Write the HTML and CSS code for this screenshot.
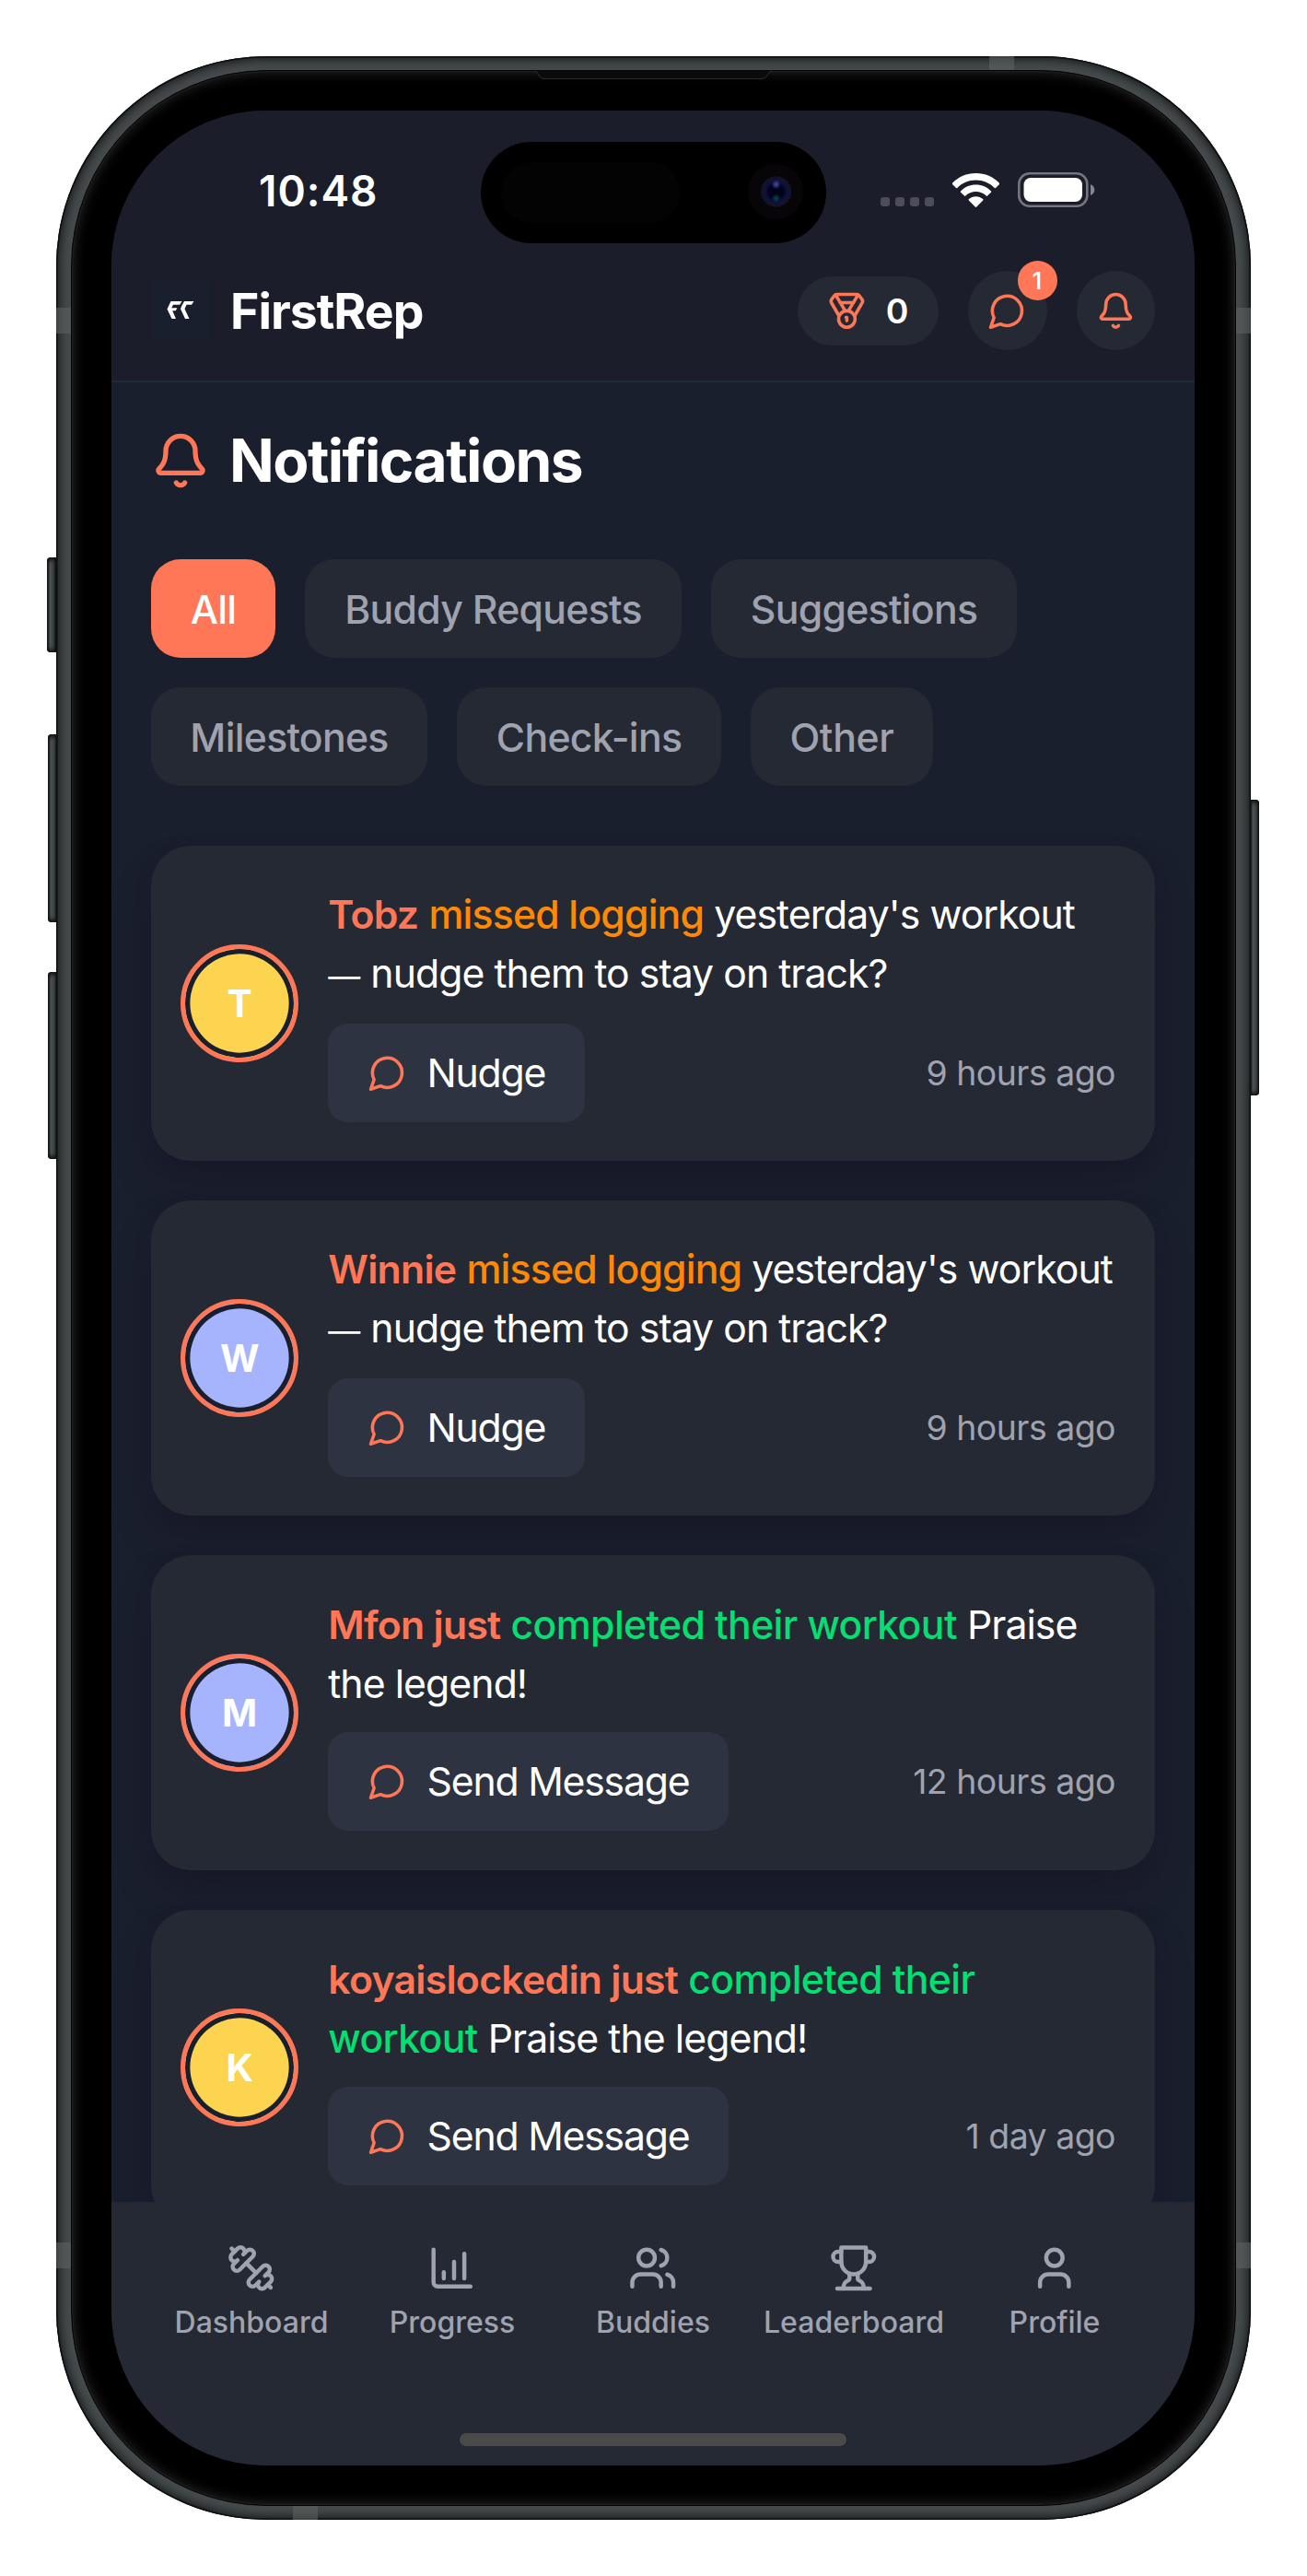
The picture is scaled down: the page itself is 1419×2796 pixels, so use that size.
FILE: index.html
```html
<!DOCTYPE html>
<html lang="en">
<head>
<meta charset="utf-8">
<title>FirstRep – Notifications</title>
<link rel="stylesheet" href="styles.css">
</head>
<body>
<svg class="sprite" aria-hidden="true">
  <symbol id="bell" viewBox="0 0 24 24"><path d="M10.268 21a2 2 0 0 0 3.464 0"/><path d="M3.262 15.326A1 1 0 0 0 4 17h16a1 1 0 0 0 .74-1.673C19.41 13.956 18 12.499 18 8A6 6 0 0 0 6 8c0 4.499-1.411 5.956-2.738 7.326"/></symbol>
  <symbol id="chat" viewBox="0 0 24 24"><path d="M7.9 20A9 9 0 1 0 4 16.1L2 22Z"/></symbol>
  <symbol id="medal" viewBox="0 0 24 24"><path d="M7.21 15 2.66 7.14a2 2 0 0 1 .13-2.2L4.4 2.8A2 2 0 0 1 6 2h12a2 2 0 0 1 1.6.8l1.6 2.14a2 2 0 0 1 .14 2.2L16.79 15"/><path d="M11 12 5.12 2.2"/><path d="m13 12 5.88-9.8"/><path d="M8 7h8"/><circle cx="12" cy="17" r="5"/><path d="M12 18v-2h-.5"/></symbol>
  <symbol id="dumbbell" viewBox="0 0 24 24"><path d="M14.4 14.4 9.6 9.6"/><path d="M18.657 21.485a2 2 0 1 1-2.829-2.828l-1.767 1.768a2 2 0 1 1-2.829-2.829l6.364-6.364a2 2 0 1 1 2.829 2.829l-1.768 1.767a2 2 0 1 1 2.828 2.829z"/><path d="m21.5 21.5-1.4-1.4"/><path d="M3.9 3.9 2.5 2.5"/><path d="M6.404 12.768a2 2 0 1 1-2.829-2.829l1.768-1.767a2 2 0 1 1-2.828-2.829l2.828-2.828a2 2 0 1 1 2.829 2.828l1.767-1.768a2 2 0 1 1 2.829 2.829z"/></symbol>
  <symbol id="chart" viewBox="0 0 24 24"><path d="M13 17V9"/><path d="M18 17V5"/><path d="M3 3v16a2 2 0 0 0 2 2h16"/><path d="M8 17v-3"/></symbol>
  <symbol id="users" viewBox="0 0 24 24"><path d="M16 21v-2a4 4 0 0 0-4-4H6a4 4 0 0 0-4 4v2"/><circle cx="9" cy="7" r="4"/><path d="M22 21v-2a4 4 0 0 0-3-3.87"/><path d="M16 3.13a4 4 0 0 1 0 7.75"/></symbol>
  <symbol id="trophy" viewBox="0 0 24 24"><path d="M6 9H4.5a2.5 2.5 0 0 1 0-5H6"/><path d="M18 9h1.5a2.5 2.5 0 0 0 0-5H18"/><path d="M4 22h16"/><path d="M10 14.66V17c0 .55-.47.98-.97 1.21C7.85 18.75 7 20.24 7 22"/><path d="M14 14.66V17c0 .55.47.98.97 1.21C16.15 18.75 17 20.24 17 22"/><path d="M18 2H6v7a6 6 0 0 0 12 0V2Z"/></symbol>
  <symbol id="user" viewBox="0 0 24 24"><path d="M19 21v-2a4 4 0 0 0-4-4H9a4 4 0 0 0-4 4v2"/><circle cx="12" cy="7" r="4"/></symbol>
</svg>

<div class="device">
  <i class="key key-action"></i><i class="key key-up"></i><i class="key key-down"></i><i class="key key-power"></i>
  <div class="frame">
    <i class="band band-l1"></i><i class="band band-l2"></i><i class="band band-r1"></i><i class="band band-r2"></i><i class="band band-t"></i><i class="band band-b"></i>
    <div class="bezel">
      <svg class="speaker" viewBox="0 0 258 12"><path d="M0 0.500H258Q255 1 253.500 4.500Q251.500 9.500 247 9.500H11Q6.500 9.500 4.500 4.500Q3 1 0 0.500Z" fill="#0b0b0b"/><path d="M0 1Q3 1 4.500 5Q6.500 9.500 11 9.500H247Q251.500 9.500 253.500 5Q255 1 258 1" fill="none" stroke="#2b2b2b"/></svg>
      <main class="screen">
        <header class="top">
          <div class="status">
            <span class="clock">10:48</span>
            <div class="signals">
              <span class="dots"><i></i><i></i><i></i><i></i></span>
              <svg class="wifi" viewBox="0 0 51 37" fill="#fff"><path d="M25.500 0C35.500 0 44.500 4 51 10.700C51.400 11.100 51.400 11.600 51 12L47 15.900C46.600 16.300 46.100 16.300 45.700 15.900C40.500 10.700 33.400 7.600 25.500 7.600S10.500 10.700 5.300 15.900C4.900 16.300 4.400 16.300 4 15.900L0 12C-.4 11.600-.4 11.100 0 10.700C6.500 4 15.500 0 25.500 0Z"/><path d="M25.500 12.500C32 12.500 37.800 15.200 42 19.400C42.400 19.800 42.400 20.300 42 20.700L38 24.600C37.600 25 37.100 25 36.700 24.600C33.800 21.800 29.900 20.100 25.500 20.100S17.200 21.800 14.300 24.600C13.900 25 13.400 25 13 24.600L9 20.700C8.600 20.300 8.600 19.800 9 19.400C13.200 15.200 19 12.500 25.500 12.500Z"/><path d="M25.500 25.200C28.400 25.200 31.100 26.300 33.100 28.100C33.600 28.500 33.600 29.100 33.200 29.500L26.300 36.500C25.800 37 25.200 37 24.700 36.500L17.800 29.500C17.400 29.100 17.400 28.500 17.900 28.100C19.900 26.300 22.600 25.200 25.500 25.200Z"/></svg>
              <svg class="battery" viewBox="0 0 84 38"><rect x="1.300" y="1.300" width="74" height="35.400" rx="11.500" fill="none" stroke="#74757d" stroke-width="2.600"/><rect x="6.500" y="6" width="63.500" height="26" rx="7.500" fill="#fff"/><path d="M79 13Q83.300 15 83.300 19T79 25Z" fill="#85868d"/></svg>
            </div>
          </div>
          <div class="appbar">
            <svg class="logo" viewBox="0 0 64 64"><rect width="64" height="64" fill="#1a1f2e"/><g fill="#fff"><path d="M21.500 21.900H33.500L31.200 25.800H24L22.200 29.300H28.300L26.800 32.300H23.200L27 41H22.500L17.500 30.500Z"/><path d="M36 21.900H46.500L44 25.800H38.500L36.500 30.300L41.500 41H37L32 30.300L33.500 26.500Z"/></g></svg>
            <span class="brand">FirstRep</span>
            <div class="actions">
              <span class="points"><svg class="ic"><use href="#medal"/></svg><b>0</b></span>
              <span class="round"><svg class="ic"><use href="#chat"/></svg><em class="badge">1</em></span>
              <span class="round"><svg class="ic"><use href="#bell"/></svg></span>
            </div>
          </div>
        </header>
        <section class="content">
          <h1><svg class="ic"><use href="#bell"/></svg><span>Notifications</span></h1>
          <div class="chips">
            <button class="chip on w-all"><span>All</span></button><button class="chip w-buddy"><span>Buddy Requests</span></button><button class="chip w-sugg"><span>Suggestions</span></button>
            <button class="chip w-mile"><span>Milestones</span></button><button class="chip w-check"><span>Check-ins</span></button><button class="chip w-other"><span>Other</span></button>
          </div>
          <article class="card">
            <span class="avatar yellow">T</span>
            <div class="body">
              <p><b>Tobz</b> <span class="missed">missed logging</span> yesterday's workout<br><span class="dash">—</span> nudge them to stay on track?</p>
              <div class="foot"><button class="act"><svg class="ic"><use href="#chat"/></svg>Nudge</button><time>9 hours ago</time></div>
            </div>
          </article>
          <article class="card">
            <span class="avatar indigo">W</span>
            <div class="body">
              <p><b>Winnie</b> <span class="missed">missed logging</span> yesterday's workout<br><span class="dash">—</span> nudge them to stay on track?</p>
              <div class="foot"><button class="act"><svg class="ic"><use href="#chat"/></svg>Nudge</button><time>9 hours ago</time></div>
            </div>
          </article>
          <article class="card">
            <span class="avatar indigo">M</span>
            <div class="body">
              <p><b>Mfon just</b> <span class="done">completed their workout</span> Praise<br>the legend!</p>
              <div class="foot"><button class="act"><svg class="ic"><use href="#chat"/></svg>Send Message</button><time>12 hours ago</time></div>
            </div>
          </article>
          <article class="card">
            <span class="avatar yellow">K</span>
            <div class="body">
              <p><b>koyaislockedin just</b> <span class="done">completed their<br>workout</span> Praise the legend!</p>
              <div class="foot"><button class="act"><svg class="ic"><use href="#chat"/></svg>Send Message</button><time>1 day ago</time></div>
            </div>
          </article>
        </section>
        <nav class="tabs">
          <a><svg class="ic"><use href="#dumbbell"/></svg>Dashboard</a>
          <a><svg class="ic"><use href="#chart"/></svg>Progress</a>
          <a><svg class="ic"><use href="#users"/></svg>Buddies</a>
          <a><svg class="ic"><use href="#trophy"/></svg>Leaderboard</a>
          <a><svg class="ic"><use href="#user"/></svg>Profile</a>
        </nav>
        <i class="home"></i>
        <div class="island"><i class="sensor"></i><i class="camera"></i></div>
      </main>
    </div>
  </div>
</div>
</body>
</html>
```

FILE: styles.css
```css
* { box-sizing: border-box; }
html, body { margin: 0; background: #fff; overflow: hidden; }
body {
  height: 2796px;
  font-family: Inter, "Liberation Sans", sans-serif;
  font-size: 42.76px;
  color: #fff;
}
i, em { font-style: normal; display: block; }
button { font: inherit; color: inherit; border: 0; margin: 0; padding: 0; }
.sprite { display: none; }
.ic {
  flex: none;
  width: 42.8px;
  height: 42.8px;
  fill: none;
  stroke: #ff7757;
  stroke-width: 2;
  stroke-linecap: round;
  stroke-linejoin: round;
}

/* Device shell */
.device { position: relative; padding: 61px; height: 2796px; }
.frame {
  position: relative;
  width: 1297px;
  height: 2674px;
  padding: 15px 16px;
  border-radius: 228px;
  background: #464b4d;
  box-shadow: inset 0 0 0 1.500px #0d0f10, inset 0 0 12px 3px #121516;
}
.bezel {
  position: relative;
  height: 2644px;
  padding: 42.500px;
  border: 1.500px solid #050505;
  border-radius: 213px;
  background: #000;
  box-shadow: inset 0 0 0 1.500px #1c1c1c, inset 0 0 14px 1px #2a2a2a;
}
.speaker { position: absolute; left: 502px; top: -1px; width: 258px; height: 12px; }
.band { position: absolute; background: #5b605f; opacity: .6; }
.band-l1, .band-l2 { left: 0; width: 16px; height: 28px; }
.band-r1, .band-r2 { right: 0; width: 16px; height: 28px; }
.band-l1, .band-r1 { top: 273px; }
.band-l2, .band-r2 { top: 2373px; }
.band-t, .band-b { width: 27px; height: 16px; }
.band-t { top: 0; left: 1013px; }
.band-b { bottom: 0; left: 257px; }
.key {
  position: absolute;
  width: 10px;
  background: linear-gradient(90deg, #101213, #4b5153 35%, #3a3f41 70%, #0b0d0d);
  border-radius: 4px 0 0 4px;
  box-shadow: inset 0 5px 4px -2px #111, inset 0 -5px 4px -2px #111;
}
.key-action { left: 51px; top: 605px; height: 103px; }
.key-up { left: 52px; top: 797px; height: 204px; }
.key-down { left: 52px; top: 1055px; height: 203px; }
.key-power { left: 1357px; top: 868px; height: 321px; border-radius: 0 4px 4px 0; }

/* Screen */
.screen {
  position: relative;
  display: flex;
  flex-direction: column;
  width: 1176px;
  height: 2556px;
  margin-left: .5px;
  border-radius: 168px;
  overflow: hidden;
  background: #1a1f2e;
}
.top { flex: none; height: 295px; background: #1c1d2a; border-bottom: 2.670px solid #1e2a3a; }
.status { display: flex; align-items: center; height: 175px; padding: 0 108px 0 160px; }
.clock { font-size: 46px; font-weight: 600; line-height: 56px; letter-spacing: 1px; }
.signals { display: flex; align-items: center; margin-left: auto; margin-bottom: 2px; }
.dots { display: flex; gap: 6px; margin: 26px 20px 0 0; }
.dots i { width: 10px; height: 10px; border-radius: 3px; background: #4c4d57; }
.wifi { width: 51px; height: 37px; margin-right: 20px; }
.battery { width: 84px; height: 38px; }
.appbar { display: flex; align-items: center; height: 85px; padding: 0 43px; }
.logo { width: 64px; height: 64px; margin-right: 22px; }
.brand { font-size: 53.500px; font-weight: 700; letter-spacing: -1px; }
.actions { display: flex; align-items: center; gap: 32px; margin-left: auto; }
.points { display: flex; align-items: center; gap: 21px; height: 75px; width: 153px; padding-left: 32px; border-radius: 38px; background: #252934; }
.points b { font-size: 37.400px; font-weight: 600; }
.round { position: relative; display: grid; place-items: center; width: 85.500px; height: 85.500px; border-radius: 50%; background: #252934; }
.badge { position: absolute; right: -11px; top: -11px; width: 43px; height: 43px; border-radius: 50%; background: #ff7757; font-size: 26px; line-height: 43px; text-align: center; font-weight: 500; }

.content { flex: 1; min-height: 0; overflow: hidden; padding: 43px 43px 0; }
h1 { display: flex; align-items: center; gap: 21px; margin: 0 0 64px; height: 85.500px; font-size: 64px; line-height: 77px; font-weight: 700; letter-spacing: -1.550px; }
h1 span { padding-bottom: 2px; }
h1 .ic { width: 64px; height: 64px; }
.chips { display: flex; flex-wrap: wrap; gap: 32px; margin-bottom: 65px; }
.chip { height: 107px; padding-top: 1px; border-radius: 32px; background: #252934; color: #9fa3af; font-weight: 500; letter-spacing: -.72px; white-space: nowrap; }
.chip.on { background: #ff7757; color: #fff; }
.w-all { width: 135px; } .w-buddy { width: 409px; } .w-sugg { width: 332px; }
.w-mile { width: 300px; } .w-check { width: 287px; } .w-other { width: 198px; letter-spacing: -.3px; }
.card {
  display: flex;
  align-items: center;
  gap: 32px;
  height: 342px;
  margin-bottom: 43px;
  padding: 43px 43px 43px 32px;
  border-radius: 43px;
  background: #252934;
  box-shadow: 0 10px 16px -2px rgba(24, 24, 38, .55), 0 27px 40px -8px rgba(24, 24, 38, .5);
}
.avatar {
  flex: none;
  display: grid;
  place-items: center;
  width: 128.300px;
  height: 128.300px;
  border: 5.350px solid #ff7757;
  border-radius: 50%;
  box-shadow: inset 0 0 0 5.350px #1a1f2e;
  font-size: 41px;
  font-weight: 700;
}
.yellow { background: #fdd44f; }
.indigo { background: #a5b4fc; }
.body { flex: 1; min-width: 0; }
.body p { margin: 0 0 20px; padding-top: 1px; line-height: 64.150px; letter-spacing: -.95px; white-space: nowrap; }
.body b { color: #ff7757; font-weight: 600; letter-spacing: -.75px; }
.missed { color: #ff8904; font-weight: 500; letter-spacing: -.82px; }
.done { color: #05df72; font-weight: 500; letter-spacing: -.63px; }
.dash { display: inline-block; width: 35px; font-size: 35px; letter-spacing: 0; }
.foot { display: flex; align-items: center; justify-content: space-between; }
.act { display: flex; align-items: center; gap: 21.400px; height: 107px; padding: 0 43px; border-radius: 21.400px; background: #2d3341; letter-spacing: -1.230px; white-space: nowrap; }
time { font-size: 37.400px; color: #9fa3af; letter-spacing: -.5px; }

.tabs {
  position: relative;
  flex: none;
  display: flex;
  height: 286px;
  padding: 43px 43px 0;
  border-top: 2.670px solid #1e2a3a;
  background: #252934;
}
.tabs a { flex: 1 1 0; display: flex; flex-direction: column; align-items: center; gap: 10.700px; color: #9fa3af; font-size: 32px; line-height: 43px; font-weight: 500; }
.tabs .ic { width: 53.500px; height: 53.500px; stroke: #9fa3af; }
.home { position: absolute; left: 378px; top: 2521px; width: 420px; height: 14px; border-radius: 7px; background: #4a4a4a; }
.island { position: absolute; left: 401px; top: 34px; width: 375px; height: 110px; border-radius: 55px; background: #000; }
.sensor { position: absolute; left: 22px; top: 22px; width: 194px; height: 66px; border-radius: 33px; background: #030303; }
.camera { position: absolute; left: 290px; top: 24.500px; width: 60px; height: 60px; border-radius: 50%; background: radial-gradient(circle at 51% 37%, #3a4590 0 1px, transparent 5px), radial-gradient(circle at 51% 62%, #06403f 0 1px, transparent 5px), radial-gradient(circle at 51% 50%, #02031a 0 8px, #0b0e45 11px, #12132b 13px, #12132b 16px, #080508 17px); }
```
